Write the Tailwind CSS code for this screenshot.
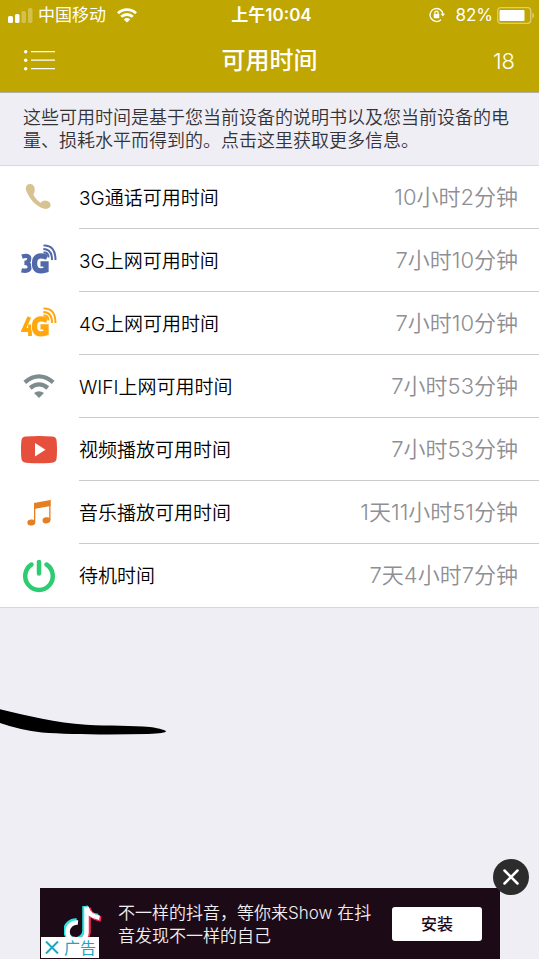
<!DOCTYPE html>
<html lang="zh-CN">
<head>
<meta charset="utf-8">
<meta name="viewport" content="width=device-width, initial-scale=1">
<title>可用时间</title>
<script src="https://cdn.jsdelivr.net/npm/@tailwindcss/browser@4"></script>
</head>
<body class="relative flex min-h-screen flex-col overflow-x-hidden bg-[#efeef4] font-['Inter','Noto_Sans_CJK_SC',sans-serif] text-black">

<header class="border-b border-[#b2b0a6] bg-[#bfa600] text-white">
  <div class="grid h-[30px] grid-cols-[1fr_auto_1fr] items-center pr-1 pl-2 text-[17px] leading-6">
    <div class="flex items-center">
      <svg class="mr-[5px] h-[15px] w-[25px]" viewBox="0 0 25 15" fill="#fff" aria-hidden="true">
        <rect x="0" y="8" width="5" height="7" rx="1.5"/><rect x="7" y="6" width="4.500" height="9" rx="1.5"/>
        <rect x="13.500" y="3" width="4.500" height="12" rx="1.500" opacity=".3"/><rect x="20" y="0" width="4.500" height="15" rx="1.500" opacity=".3"/>
      </svg>
      <span>中国移动</span>
      <svg class="ml-[11px] h-[15px] w-5" viewBox="0 0 20 15" fill="none" stroke="#fff" stroke-width="2.800" aria-hidden="true">
        <path d="M1 5.300a13 13 0 0 1 18 0M4.200 8.800a8.400 8.400 0 0 1 11.600 0"/><path d="M10 14.600L6.800 11.400a4.600 4.600 0 0 1 6.400 0z" fill="#fff" stroke="none"/>
      </svg>
    </div>
    <span class="font-semibold">上午10:04</span>
    <div class="flex items-center justify-end">
      <svg class="mr-[10px] h-4 w-4" viewBox="0 0 16 16" fill="none" stroke="#fff" stroke-width="1.300" aria-hidden="true">
        <path d="M12 12.800A6.500 6.500 0 1 1 14 7"/><path d="M11.600 6.800h4.400L13.900 9.600z" fill="#fff" stroke="none"/>
        <rect x="4.700" y="7" width="5.600" height="4.300" rx=".5" fill="#fff" stroke="none"/><path d="M5.900 7V5.700a1.600 1.600 0 0 1 3.200 0V7"/>
      </svg>
      <span>82%</span>
      <svg class="ml-1 h-[17px] w-[38px]" viewBox="0 0 38 17" aria-hidden="true">
        <rect x=".7" y=".7" width="33" height="15.600" rx="3" fill="none" stroke="#fff" stroke-opacity=".45" stroke-width="1.300"/>
        <rect x="2.500" y="3" width="25" height="11" rx="1" fill="#fff"/><path d="M35.300 5.500c2.300 1.200 2.300 4.800 0 6z" fill="#fff" fill-opacity=".45"/>
      </svg>
    </div>
  </div>
  <div class="grid h-[62px] grid-cols-[1fr_auto_1fr] items-center pr-6 pl-6">
    <button type="button" aria-label="菜单" class="w-8">
      <svg class="h-[22px] w-8" viewBox="0 0 32 22" fill="#fff" aria-hidden="true">
        <circle cx="1.700" cy="1.700" r="1.700"/><circle cx="1.700" cy="10.200" r="1.700"/><circle cx="1.700" cy="18.700" r="1.700"/>
        <path d="M7 1h24v1.200H7zM7 9.600h24v1.200H7zM7 18.100h24v1.200H7z"/>
      </svg>
    </button>
    <h1 class="text-[24px] leading-8 font-medium">可用时间</h1>
    <span class="justify-self-end text-[22px] font-light">18</span>
  </div>
</header>

<main>
  <p class="px-[23px] pt-[13px] pb-[13px] text-[18px] leading-[23px] font-[350] text-[#333338]"><a href="#info">这些可用时间是基于您当前设备的说明书以及您当前设备的电量、损耗水平而得到的。点击这里获取更多信息。</a></p>

  <ul class="border-y border-[#d8d8dc] bg-white">
    <li class="flex h-[63px] items-center">
      <span class="flex w-[79px] shrink-0 justify-center pr-px"><svg class="h-9 w-9" viewBox="0 0 36 36" fill="#d6c391" aria-hidden="true"><path d="M8.500 4C5 4.500 4 8 5.500 11.500C9 20 16 27 23.500 28.800C27.500 29.500 30.500 26.500 29.300 23.500C28 21 24 19.500 21.500 21.300L19.500 22.700C16.500 20.800 14 18 12.300 14.500L13.300 12.500C14.800 9 13 3.500 8.500 4Z"/></svg></span>
      <div class="flex h-full grow items-center justify-between border-b border-[#cbcacf] pr-[21px]"><span class="pt-1 text-[19px] font-[350]">3G通话可用时间</span><span class="text-[22px] font-[350] text-[#8e8e93]">10小时2分钟</span></div>
    </li>
    <li class="flex h-[63px] items-center">
      <span class="flex w-[79px] shrink-0 justify-center pr-px"><svg class="h-9 w-9" viewBox="0 0 36 36" aria-hidden="true"><g fill="none" stroke="#5169a8"><path d="M1 13.600Q8 11.200 8.300 15.800Q8 19.600 3.500 19.800Q8.700 20 8.700 24Q8.500 29 .5 27.300" stroke-width="4.300"/><path d="M26 14.300Q13.500 9.800 13.500 20.500Q13.500 30.500 25 27V20.800H19.500" stroke="#fff" stroke-width="7"/><path d="M26 14.300Q13.500 9.800 13.500 20.500Q13.500 30.500 25 27V20.800H19.500" stroke-width="5.300"/><path d="M22.500 9.500Q27.500 9 27.500 14.500M22.300 6Q31 6 31 17M22.500 2.500Q34.500 2 34.500 17" stroke-width="2"/></g></svg></span>
      <div class="flex h-full grow items-center justify-between border-b border-[#cbcacf] pr-[21px]"><span class="pt-1 text-[19px] font-[350]">3G上网可用时间</span><span class="text-[22px] font-[350] text-[#8e8e93]">7小时10分钟</span></div>
    </li>
    <li class="flex h-[63px] items-center">
      <span class="flex w-[79px] shrink-0 justify-center pr-px"><svg class="h-9 w-9" viewBox="0 0 36 36" aria-hidden="true"><g fill="none" stroke="#ffa70d"><path d="M8.300 11L2.500 24H12M9 18.500V30" stroke-width="3.800"/><path d="M26 14.300Q13.500 9.800 13.500 20.500Q13.500 30.500 25 27V20.800H19.500" stroke="#fff" stroke-width="7"/><path d="M26 14.300Q13.500 9.800 13.500 20.500Q13.500 30.500 25 27V20.800H19.500" stroke-width="5.300"/><path d="M22.500 9.500Q27.500 9 27.500 14.500M22.300 6Q31 6 31 17M22.500 2.500Q34.500 2 34.500 17" stroke-width="2"/></g></svg></span>
      <div class="flex h-full grow items-center justify-between border-b border-[#cbcacf] pr-[21px]"><span class="pt-1 text-[19px] font-[350]">4G上网可用时间</span><span class="text-[22px] font-[350] text-[#8e8e93]">7小时10分钟</span></div>
    </li>
    <li class="flex h-[63px] items-center">
      <span class="flex w-[79px] shrink-0 justify-center pr-px"><svg class="h-9 w-9" viewBox="0 0 36 36" aria-hidden="true"><g fill="none" stroke="#7f8c8d" stroke-width="4.300"><path d="M3.800 13.300Q18 1.500 32.200 13.300M9.200 19Q18 11.800 26.800 19"/></g><path d="M18 29L13 24Q18 20.500 23 24Z" fill="#7f8c8d"/></svg></span>
      <div class="flex h-full grow items-center justify-between border-b border-[#cbcacf] pr-[21px]"><span class="pt-1 text-[19px] font-[350]">WIFI上网可用时间</span><span class="text-[22px] font-[350] text-[#8e8e93]">7小时53分钟</span></div>
    </li>
    <li class="flex h-[63px] items-center">
      <span class="flex w-[79px] shrink-0 justify-center pr-px"><svg class="h-9 w-9" viewBox="0 0 36 36" aria-hidden="true"><path d="M5 4.500Q18 3.500 31 4.500Q35.500 4.500 35.700 9.500Q36.300 17.500 35.700 25.500Q35.500 30.500 31 30.800Q18 31.800 5 30.800Q.5 30.500 .3 25.500Q-.3 17.500 .3 9.500Q.5 4.500 5 4.500Z" fill="#e74f3d"/><path d="M14 11L24.500 17.700L14 24.500Z" fill="#fff"/></svg></span>
      <div class="flex h-full grow items-center justify-between border-b border-[#cbcacf] pr-[21px]"><span class="pt-1 text-[19px] font-[350]">视频播放可用时间</span><span class="text-[22px] font-[350] text-[#8e8e93]">7小时53分钟</span></div>
    </li>
    <li class="flex h-[63px] items-center">
      <span class="flex w-[79px] shrink-0 justify-center pr-px"><svg class="h-9 w-9" viewBox="0 0 36 36" fill="#e67e22" aria-hidden="true"><path d="M13 8L29.500 5V11L13 14Z"/><path d="M13 8h1.300v19.500H13zM28.200 5.200h1.300V25h-1.300z"/><ellipse cx="10.300" cy="27.500" rx="4" ry="3" transform="rotate(-12 10.300 27.500)"/><ellipse cx="25.500" cy="25.300" rx="4" ry="3" transform="rotate(-12 25.500 25.300)"/></svg></span>
      <div class="flex h-full grow items-center justify-between border-b border-[#cbcacf] pr-[21px]"><span class="pt-1 text-[19px] font-[350]">音乐播放可用时间</span><span class="text-[22px] font-[350] text-[#8e8e93]">1天11小时51分钟</span></div>
    </li>
    <li class="flex h-[63px] items-center">
      <span class="flex w-[79px] shrink-0 justify-center pr-px"><svg class="h-9 w-9" viewBox="0 0 36 36" fill="none" stroke="#2ecc71" stroke-width="4.500" stroke-linecap="round" aria-hidden="true"><path d="M18 4V15.500M10.500 6.500A13.800 13.800 0 1 0 25.500 6.500"/></svg></span>
      <div class="flex h-full grow items-center justify-between pr-[21px]"><span class="pt-1 text-[19px] font-[350]">待机时间</span><span class="text-[22px] font-[350] text-[#8e8e93]">7天4小时7分钟</span></div>
    </li>
  </ul>

  <svg class="mt-[100px] h-7 w-[167px]" viewBox="0 0 167 28" aria-hidden="true"><path d="M0 1.200C28 8 56 14.500 86 16.800C110 18 132 17.500 150 19Q166 21.500 166 23.500Q166 25 148 26C108 27 68 26.500 42 24.500Q20 22 0 15Z" fill="#000"/></svg>
</main>

<aside class="relative mt-auto mr-[39px] ml-10 flex h-[71px] items-center bg-[#1d0a17] pr-[18px]">
  <svg class="mt-1 ml-[24px] h-[50px] w-[38px] shrink-0" viewBox="0 0 38 50" fill="none" stroke-width="5.500" aria-hidden="true">
    <path d="M21 5V29A9.500 9.500 0 1 1 12.500 20M21 5Q23 14 34 15.500" stroke="#27e5e1"/>
    <path d="M24 7V31A9.500 9.500 0 0 1 8 37M24 7Q26 16.500 37 18" stroke="#fe2858"/>
    <path d="M22.500 6V30A9.500 9.500 0 1 1 14 21.500M22.500 6Q24.500 15 35.500 16.800" stroke="#fff" stroke-width="4.500"/>
  </svg>
  <p class="ml-4 w-[264px] pt-[2px] text-[17px] leading-[23px] font-[350] text-[#f1eef0]">不一样的抖音，等你来Show 在抖音发现不一样的自己</p>
  <button type="button" class="ml-auto h-[34px] w-[90px] rounded-[3px] bg-white text-[16px] font-medium text-[#1d0a17]">安装</button>
  <a href="#ad" class="absolute bottom-px left-px flex h-[21px] w-[58px] items-center gap-[5px] bg-white pl-1 text-[16px] leading-5 text-[#15a9c4]">
    <svg class="h-[13px] w-[14px]" viewBox="0 0 14 13" stroke="currentColor" stroke-width="2" aria-hidden="true"><path d="M1 .5L13 12.500M13 .5L1 12.500"/></svg>广告</a>
  <button type="button" aria-label="关闭" class="absolute -top-[29px] -right-[29px] flex size-9 items-center justify-center rounded-full bg-[#2c2c2c]">
    <svg class="size-4" viewBox="0 0 16 16" stroke="#fff" stroke-width="2.500" stroke-linecap="round" aria-hidden="true"><path d="M1.500 1.500L14.500 14.500M14.500 1.500L1.500 14.500"/></svg>
  </button>
</aside>
</body>
</html>
